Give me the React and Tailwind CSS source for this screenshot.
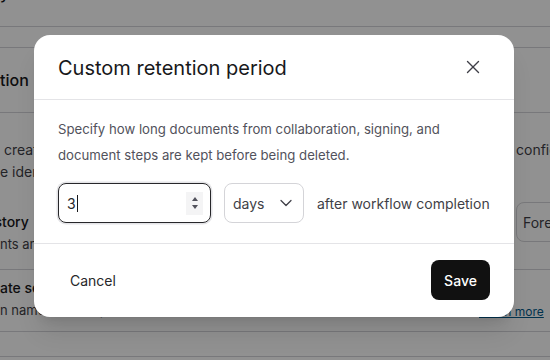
import React from 'react'
import { X, ChevronDown } from 'lucide-react'

// text fragments of the page behind the modal, cut at the left edge like the screenshot
const Cut = ({ hidden, w, children }) => (
  <span className="flex whitespace-nowrap">
    <span className="shrink-0 flex justify-end overflow-hidden" style={{ width: w }}>
      <span className="shrink-0">{hidden}</span>
    </span>
    <span>{children}</span>
  </span>
)

const BackgroundPage = () => {
  return (
    <div className="-ml-[40px] w-[700px] text-zinc-900">
      {/* top bar */}
      <div className="h-[27px] border-b border-zinc-300 overflow-hidden">
        <div className="-mt-[19px] text-[16px] font-medium">
          <Cut hidden="Privac" w={40}>
            <span className="inline-flex items-center gap-1">y <ChevronDown size={14} strokeWidth={2.5} /></span>
          </Cut>
        </div>
      </div>
      <div className="h-[21px] border-b border-zinc-300"></div>
      {/* section heading */}
      <div className="h-[65px] flex items-center border-b border-zinc-300">
        <h2 className="text-[16px] font-medium">
          <Cut hidden="Reten" w={40}>tion</Cut>
        </h2>
      </div>
      {/* retention settings */}
      <div className="grid grid-cols-[556px_1fr] pt-[26px] pb-[14px] border-b border-zinc-300">
        <div>
          <div className="text-[14px] leading-[22px] text-zinc-700">
            <Cut hidden="Documents you" w={40}>{'\u00a0'}created in workflows are stored until the period you</Cut>
          </div>
          <div className="text-[14px] leading-[22px] text-zinc-700">
            <Cut hidden="th" w={40}>e identity of each signer is verified</Cut>
          </div>
          <div className="mt-[28px] text-[14px] leading-[22px] font-medium">
            <Cut hidden="His" w={42}>tory</Cut>
          </div>
          <div className="text-[13px] leading-[22px] text-zinc-700">
            <Cut hidden="Docume" w={40}>nts and activity events</Cut>
          </div>
        </div>
        <div>
          <div className="text-[14px] leading-[22px] text-zinc-700 whitespace-nowrap">configured</div>
          <div className="mt-[41px] w-[143px] h-[40px] rounded-lg border border-zinc-300 flex items-center px-[6px] text-[14px] text-zinc-700">
            Forever
          </div>
        </div>
      </div>
      {/* template settings */}
      <div className="grid grid-cols-[556px_1fr] h-[62px] pt-[7px] border-b border-zinc-300">
        <div>
          <div className="text-[14px] leading-[22px] font-medium">
            <Cut hidden="Templ" w={40}>ate settings</Cut>
          </div>
          <div className="text-[13px] leading-[22px] text-zinc-700">
            <Cut hidden="Applicatio" w={40}>n names for templates</Cut>
          </div>
        </div>
        <div className="pt-[21px] -ml-[37px]">
          <span className="text-[12px] leading-[22px] text-sky-800 underline whitespace-nowrap">Learn more</span>
        </div>
      </div>
      <div className="h-[25px] border-b border-zinc-300"></div>
    </div>
  )
}

const RetentionModal = () => {
  return (
    <div className="w-[480px] bg-white rounded-2xl shadow-xl">
      {/*header*/}
      <div className="h-[65px] flex items-center justify-between pl-6 pr-[30px] border-b border-zinc-200">
        <h3 className="text-[20px] text-zinc-900 pt-[2px]">Custom retention period</h3>
        <button type="button" className="text-zinc-700">
          <X size={22} strokeWidth={1.5} />
        </button>
      </div>
      {/*body*/}
      <div className="px-6 pt-[16px] pb-[20px] border-b border-zinc-200">
        <p className="text-[13.2px] leading-[26px] text-zinc-600">
          Specify how long documents from collaboration, signing, and document steps are kept before being deleted.
        </p>
        <div className="mt-[15px] flex items-center gap-[13px]">
          <div className="w-[153px] h-[40px] rounded-lg border-[1.5px] border-zinc-800 shadow-[0_0_0_1.5px_#e4e4e7] flex items-center pl-[8px] pr-[7px]">
            <span className="text-[14px] text-zinc-800">3</span>
            <span className="w-px h-[17px] bg-zinc-900 ml-[1px]"></span>
            <div className="ml-auto w-[17px] h-[23px] bg-zinc-100 flex flex-col items-center justify-center gap-[4px]">
              <span className="w-0 h-0 border-l-[3.5px] border-r-[3.5px] border-b-[4px] border-l-transparent border-r-transparent border-b-zinc-600"></span>
              <span className="w-0 h-0 border-l-[3.5px] border-r-[3.5px] border-t-[4px] border-l-transparent border-r-transparent border-t-zinc-600"></span>
            </div>
          </div>
          <div className="w-[80px] h-[40px] rounded-lg border border-zinc-300 flex items-center justify-between pl-[8px] pr-[7px]">
            <span className="text-[14px] text-zinc-700">days</span>
            <ChevronDown size={20} strokeWidth={1.5} className="text-zinc-700" />
          </div>
          <span className="text-[14px] text-zinc-700">after workflow completion</span>
        </div>
      </div>
      {/*footer*/}
      <div className="flex items-center justify-between px-6 pt-4 pb-[17px]">
        <button type="button" className="h-[40px] px-3 text-[14px] text-zinc-800 rounded-lg">
          Cancel
        </button>
        <button type="button" className="h-[40px] w-[59px] text-[14px] font-medium text-white bg-[#111111] rounded-lg">
          Save
        </button>
      </div>
    </div>
  )
}

export default function App() {
  return (
    <div className="relative w-[550px] h-[360px] overflow-hidden bg-white" style={{ fontFamily: 'Inter, "Noto Sans", sans-serif' }}>
      <BackgroundPage />
      <div className="absolute inset-0 bg-black/[0.43] flex justify-center items-start pt-[35px] pr-[2px]">
        <RetentionModal />
      </div>
    </div>
  )
}
